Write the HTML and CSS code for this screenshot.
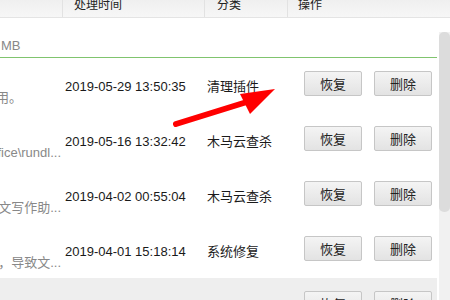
FILE: index.html
```html
<!DOCTYPE html>
<html lang="zh-CN">
<head>
  <meta charset="UTF-8" />
  <meta name="viewport" content="width=device-width, initial-scale=1.0" />
  <title>恢复区</title>
  <link rel="stylesheet" href="styles.css">
</head>
<body>
  <div class="panel">
    <div class="head">
      <div class="col c1"></div>
      <div class="col c2">处理时间</div>
      <div class="col c3">分类</div>
      <div class="col c4">操作</div>
    </div>
    <div class="main">
      <div class="list">
        <div class="group">MB</div>
        <div class="row">
          <div class="c1"><span class="desc short">用。</span></div>
          <div class="c2">2019-05-29 13:50:35</div>
          <div class="c3">清理插件</div>
          <div class="c4"><button>恢复</button><button>删除</button></div>
        </div>
        <div class="row">
          <div class="c1"><span class="desc">fice\rundl...</span></div>
          <div class="c2">2019-05-16 13:32:42</div>
          <div class="c3">木马云查杀</div>
          <div class="c4"><button>恢复</button><button>删除</button></div>
        </div>
        <div class="row">
          <div class="c1"><span class="desc">文写作助...</span></div>
          <div class="c2">2019-04-02 00:55:04</div>
          <div class="c3">木马云查杀</div>
          <div class="c4"><button>恢复</button><button>删除</button></div>
        </div>
        <div class="row">
          <div class="c1"><span class="desc">不，导致文...</span></div>
          <div class="c2">2019-04-01 15:18:14</div>
          <div class="c3">系统修复</div>
          <div class="c4"><button>恢复</button><button>删除</button></div>
        </div>
        <div class="row hover">
          <div class="c1"><span class="desc">...</span></div>
          <div class="c2">2019-03-28 10:02:11</div>
          <div class="c3">清理插件</div>
          <div class="c4"><button>恢复</button><button>删除</button></div>
        </div>
      </div>
      <div class="scroll"><div class="thumb"></div></div>
    </div>
  </div>
  <svg class="arrow" width="450" height="300" viewBox="0 0 450 300">
    <line x1="176" y1="124" x2="250" y2="101" stroke="#f00" stroke-width="6" stroke-linecap="round" />
    <polygon points="240,94 275,89 250,114" fill="#f00" />
  </svg>
</body>
</html>
```

FILE: styles.css
```css
body {
  margin: 0;
  width: 450px;
  height: 300px;
  overflow: hidden;
  font-family: "Liberation Sans", "Noto Sans CJK SC", sans-serif;
  font-size: 13px;
  color: #1a1a1a;
  background: #fff;
  position: relative;
}
.head {
  display: flex;
  height: 17px;
  border-bottom: 1px solid #e4e4e4;
  background: linear-gradient(#efefef, #f7f7f7);
  font-size: 12px;
  line-height: 12px;
  color: #222;
}
.head .col {
  margin-top: -1px;
  border-right: 1px solid #e2e2e2;
  height: 18px;
  box-sizing: border-box;
}
.head .c1 { width: 63px; }
.head .c2 { width: 142px; padding-left: 11px; }
.head .c3 { width: 83px; padding-left: 12px; }
.head .c4 { flex: 1; padding-left: 10px; border-right: none; }
.main {
  display: flex;
  height: 282px;
}
.list {
  width: 437px;
}
.group {
  height: 40px;
  border-bottom: 1px solid #80c46e;
  display: flex;
  align-items: flex-end;
  padding: 0 0 3px 1px;
  box-sizing: border-box;
  line-height: 16px;
  color: #888;
}
.row {
  display: flex;
  height: 55px;
  line-height: 16px;
}
.row.hover {
  background: #eeeeee;
}
.row .c1 {
  width: 63px;
  flex-shrink: 0;
  overflow: hidden;
  white-space: nowrap;
  display: flex;
  justify-content: flex-end;
  align-items: flex-start;
  padding-top: 32px;
  box-sizing: border-box;
}
.desc {
  flex-shrink: 0;
  color: #888;
  padding-right: 2px;
}
.desc.short {
  padding-right: 41px;
}
.row .c2 {
  width: 142px;
  padding: 21px 0 0 2px;
  box-sizing: border-box;
  white-space: nowrap;
}
.row .c3 {
  width: 83px;
  padding: 21px 0 0 2px;
  box-sizing: border-box;
  white-space: nowrap;
}
.row .c4 {
  flex: 1;
  display: flex;
  gap: 12px;
  padding: 13px 0 0 16px;
}
button {
  width: 58px;
  height: 25px;
  padding: 0;
  border: 1px solid #c6c6c6;
  border-radius: 2px;
  background: linear-gradient(#f4f4f4, #e3e3e3);
  font-family: "Noto Sans CJK SC", sans-serif;
  font-size: 13px;
  color: #222;
}
.scroll {
  width: 11px;
  margin: 14px 0 0 2px;
  background: #f1f1f1;
}
.thumb {
  height: 180px;
  background: #dcdcdc;
  border-radius: 5px;
}
.arrow {
  position: absolute;
  top: 0;
  left: 0;
  pointer-events: none;
}
```
